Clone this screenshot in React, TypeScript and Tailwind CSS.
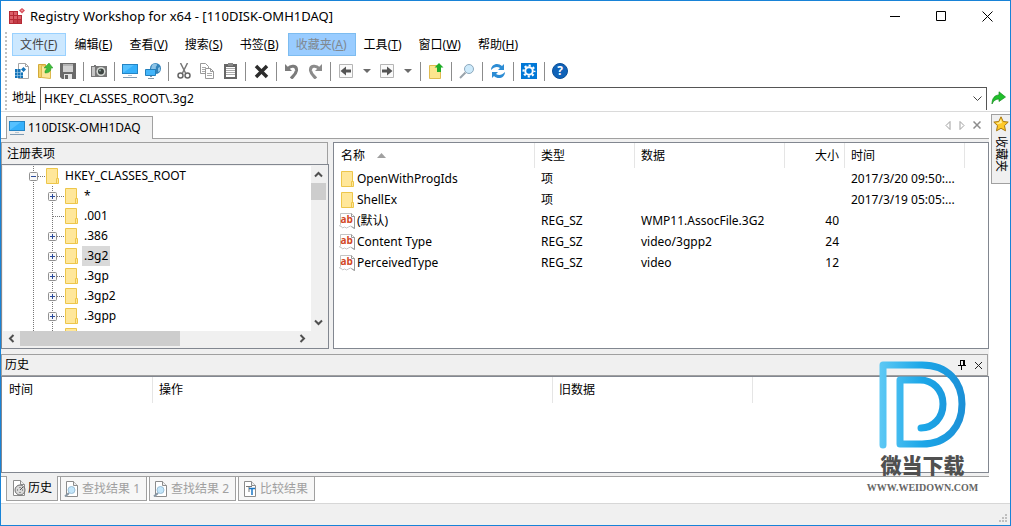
import type { ReactNode } from 'react'

const menus = [
  { label: '文件', key: 'F', style: 'border-[#99d1ff] bg-[#cce8ff] text-[#444]' },
  { label: '编辑', key: 'E', style: 'border-transparent' },
  { label: '查看', key: 'V', style: 'border-transparent' },
  { label: '搜索', key: 'S', style: 'border-transparent' },
  { label: '书签', key: 'B', style: 'border-transparent' },
  { label: '收藏夹', key: 'A', style: 'border-[#7dbcf0] bg-[#99ccff] text-[#808890]' },
  { label: '工具', key: 'T', style: 'border-transparent' },
  { label: '窗口', key: 'W', style: 'border-transparent' },
  { label: '帮助', key: 'H', style: 'border-transparent' },
]

const treeKeys = [
  { name: '*', leaf: false },
  { name: '.001', leaf: true },
  { name: '.386', leaf: false },
  { name: '.3g2', leaf: false, selected: true },
  { name: '.3gp', leaf: false },
  { name: '.3gp2', leaf: false },
  { name: '.3gpp', leaf: false },
  { name: '', leaf: false },
]

const values = [
  { name: 'OpenWithProgIds', type: '项', data: '', size: '', time: '2017/3/20 09:50:...' },
  { name: 'ShellEx', type: '项', data: '', size: '', time: '2017/3/19 05:05:...' },
  { name: '(默认)', type: 'REG_SZ', data: 'WMP11.AssocFile.3G2', size: '40', time: '' },
  { name: 'Content Type', type: 'REG_SZ', data: 'video/3gpp2', size: '24', time: '' },
  { name: 'PerceivedType', type: 'REG_SZ', data: 'video', size: '12', time: '' },
]

function Icon({ children }: { children: ReactNode }) {
  return (
    <svg width="16" height="16" viewBox="0 0 16 16" className="shrink-0" aria-hidden="true">
      {children}
    </svg>
  )
}

function Folder() {
  return (
    <svg width="13" height="16" viewBox="0 0 13 16" className="shrink-0" aria-hidden="true">
      <path d="M.5.5h11v10h1v5H.5z" fill="#ffe79a" stroke="#edc64b" />
      <path d="M10.500 15v-4.500h1.500" fill="none" stroke="#edc64b" />
    </svg>
  )
}

function Monitor() {
  return (
    <Icon>
      <rect x=".5" y="1.500" width="15" height="9" fill="#35b0fb" stroke="#2484c4" />
      <path d="M1 10V2h11z" fill="#56c1ff" />
      <path d="M6 12.500h4" stroke="#b9c6d2" />
      <path d="M1 14.500h14" stroke="#7f9bb3" />
    </Icon>
  )
}

function StringValue() {
  return (
    <Icon>
      <path d="M1.500.5h11l3 3v12l-2-1-2-1.500-2 1-2 1-2-1-2 1-1-1.500-2-.5 1-1.500z" fill="#fff" stroke="#c4c4c4" />
      <path d="M12.500.5v3h3v12l-3-2" fill="none" stroke="#999" />
      <text x="1.500" y="10" fontSize="10" fontWeight="bold" fontFamily="Open Sans, sans-serif" fill="#d24726">ab</text>
    </Icon>
  )
}

function Page({ children }: { children: ReactNode }) {
  return (
    <Icon>
      <path d="M2.500.5h7l4 4v11h-11z" fill="#fff" stroke="#8c8c8c" />
      <path d="M9.500.5v4h4" fill="#eee" stroke="#8c8c8c" />
      {children}
    </Icon>
  )
}

function SearchPage() {
  return (
    <Page>
      <path d="M5 12l-4 3.500" stroke="#8796a3" strokeWidth="2" />
      <circle cx="7.500" cy="9" r="3.500" fill="#c3e6fb" stroke="#9cc0d8" />
    </Page>
  )
}

function Separator() {
  return <span className="h-[19px] w-px bg-[#8c8c8c]" />
}

function Tool({ label, children }: { label: string; children: ReactNode }) {
  return (
    <button type="button" aria-label={label} title={label} className="shrink-0">
      <Icon>{children}</Icon>
    </button>
  )
}

function DropArrow({ label }: { label: string }) {
  return (
    <button type="button" aria-label={label} className="flex w-[11px] justify-center">
      <svg width="8" height="4" viewBox="0 0 8 4">
        <path d="M0 0h8L4 4z" fill="#6b6b6b" />
      </svg>
    </button>
  )
}

function TitleBar() {
  return (
    <header className="flex h-[30px] items-center pl-2">
      <Icon>
        <path d="M0 3h9v4h4v9H0z" fill="#b52a35" />
        <path d="M1 4h3v3H1zM5 4h3v3H5zM1 8h3v3H1zM5 8h3v3H5zM9 8h3v3H9zM1 12h3v3H1z" fill="#db6069" />
        <path d="M5 12h3v3H5zM9 12h3v3H9z" fill="#c23c47" />
        <path d="M13 0l3 2.500-3 3-3-3z" fill="#d9525d" />
        <path d="M13 1.500l1 1-1 1-1-1z" fill="#f3aab0" />
      </Icon>
      <h1 className="ml-[5px] flex-1 text-[13px]">Registry Workshop for x64 - [110DISK-OMH1DAQ]</h1>
      <div className="flex">
        <button type="button" aria-label="最小化" className="flex h-7 w-[46px] items-center justify-center">
          <svg width="11" height="11" viewBox="0 0 11 11"><path d="M0 5.500h10" stroke="#000" /></svg>
        </button>
        <button type="button" aria-label="最大化" className="flex h-7 w-[46px] items-center justify-center">
          <svg width="11" height="11" viewBox="0 0 11 11"><path d="M.5.5h9v9h-9z" fill="none" stroke="#000" /></svg>
        </button>
        <button type="button" aria-label="关闭" className="flex h-7 w-[46px] items-center justify-center">
          <svg width="11" height="11" viewBox="0 0 11 11"><path d="M.5.5l10 10M10.500.5l-10 10" stroke="#000" /></svg>
        </button>
      </div>
    </header>
  )
}

function MenuBar() {
  return (
    <nav className="flex h-[27px] items-center">
      {menus.map((m) => (
        <button key={m.key} type="button" className={`h-[23px] border pr-2 pl-[7px] whitespace-nowrap ${m.style}`}>
          {m.label}(<u>{m.key}</u>)
        </button>
      ))}
    </nav>
  )
}

function Toolbar() {
  return (
    <div className="flex h-7 items-center gap-[7px] pb-[2px] pl-[2px]">
      <Tool label="新建">
        <path d="M4.500.5h7l3 3v12h-10z" fill="#fff" stroke="#a5a5a5" />
        <path d="M11.500.5v3h3" fill="none" stroke="#a5a5a5" />
        <path d="M1 6h6v3h2v6H1z" fill="#1674b8" />
        <path d="M3.500 6v9M6.500 6v9M1 9.500h8M1 12.500h8" stroke="#a9d2ec" strokeWidth=".6" />
        <path d="M9.500 4l2.500 2.500L9.500 9 7 6.500z" fill="#1674b8" />
      </Tool>
      <Tool label="打开">
        <path d="M1.500 1.500h7v13h-7z" fill="#f3d36a" stroke="#d2aa3a" />
        <path d="M4.500 2.500l9 2v11l-9-1z" fill="#fbe69a" stroke="#ddb94e" />
        <path d="M8 10V8l2-3H7l5-5 4 5h-2c0 4-3 5-6 5z" fill="#3fbc3c" stroke="#2a9a2a" strokeWidth=".5" />
      </Tool>
      <Tool label="保存">
        <path d="M0 0h16v16H2l-2-2z" fill="#6a6a6a" />
        <path d="M3 1h10v8H3z" fill="#d2d2d2" />
        <path d="M3 1h10v2H3z" fill="#b4b4b4" />
        <path d="M4 11h8v5H4z" fill="#e6e6e6" />
        <path d="M5 12h3v4H5z" fill="#666" />
      </Tool>
      <Separator />
      <Tool label="快照">
        <path d="M0 3h3V2h2v1h11v11H0z" fill="#777" />
        <path d="M1 4h3v9H1z" fill="#c5c5c5" />
        <circle cx="10" cy="8.500" r="4.500" fill="#d6dad6" />
        <circle cx="10" cy="8.500" r="3" fill="#3d4542" />
        <circle cx="9" cy="7.500" r="1" fill="#93aaa3" />
      </Tool>
      <Separator />
      <button type="button" aria-label="本地计算机"><Monitor /></button>
      <Tool label="网络计算机">
        <circle cx="10.500" cy="5.500" r="5.500" fill="#3283ba" />
        <path d="M7 2c3-2 5-1 5 0s-2 2-1 3-4 2-5 1zM13 5l2-1v4l-2 1z" fill="#8cc3e6" />
        <path d="M.5 6.500h10v6H.5z" fill="#43b5fa" stroke="#2380bd" />
        <path d="M3 15.500h6M5 13.500h2" stroke="#8498a8" />
      </Tool>
      <Separator />
      <Tool label="剪切">
        <path d="M4.500 0l5 10M11.500 0l-5 10" stroke="#777" strokeWidth="1.500" />
        <circle cx="4.500" cy="12.500" r="2.500" fill="none" stroke="#666" strokeWidth="1.500" />
        <circle cx="11.500" cy="12.500" r="2.500" fill="none" stroke="#666" strokeWidth="1.500" />
      </Tool>
      <Tool label="复制">
        <path d="M1.500.5h5l3 3v7h-8z" fill="#fff" stroke="#999" />
        <path d="M3 4.500h4M3 6.500h4M3 8.500h3" stroke="#aaa" />
        <path d="M6.500 5.500h5l3 3v7h-8z" fill="#fff" stroke="#999" />
        <path d="M11.500 5.500v3h3" fill="none" stroke="#999" />
        <path d="M8 10.500h5M8 12.500h5" stroke="#aaa" />
      </Tool>
      <Tool label="粘贴">
        <path d="M2 1h13v15H2z" fill="#666" />
        <path d="M4 4h9v10H4z" fill="#fff" />
        <path d="M4 5.500h9M4 7.500h9M4 9.500h9M4 11.500h9" stroke="#aaa" />
        <path d="M6 0h5v3H6z" fill="#888" />
      </Tool>
      <Separator />
      <Tool label="删除">
        <path d="M3 3l11 11M14 3L3 14" stroke="#2c2c2c" strokeWidth="3.500" />
      </Tool>
      <Separator />
      <Tool label="撤消">
        <path d="M4 5.500C7 2 13 2.500 12.500 7.500 12 11 9.500 12.500 7 15.500" fill="none" stroke="#7b7b7b" strokeWidth="3" />
        <path d="M1 1v7h7z" fill="#7b7b7b" />
      </Tool>
      <Tool label="重做">
        <path d="M12 5.500C9 2 3 2.500 3.500 7.500 4 11 6.500 12.500 9 15.500" fill="none" stroke="#8b8b8b" strokeWidth="3" />
        <path d="M15 1v7H8z" fill="#8b8b8b" />
      </Tool>
      <Separator />
      <Tool label="后退">
        <path d="M1.500 1.500h13v13h-13z" fill="#fafafa" stroke="#b5b5b5" />
        <path d="M2.500 8L8 3.500v3h5v3H8v3z" fill="#555" />
      </Tool>
      <DropArrow label="后退历史" />
      <Tool label="前进">
        <path d="M1.500 1.500h13v13h-13z" fill="#fafafa" stroke="#b5b5b5" />
        <path d="M13.500 8L8 3.500v3H3v3h5v3z" fill="#555" />
      </Tool>
      <DropArrow label="前进历史" />
      <Separator />
      <Tool label="上一级">
        <path d="M1.500 2.500h11v13h-11z" fill="#fde58e" stroke="#e0bb50" />
        <path d="M11 0l4.500 4.500H13V9H9V4.500H6.500z" fill="#1fae28" />
      </Tool>
      <Separator />
      <Tool label="查找">
        <path d="M6.500 9.500L1 15" stroke="#9aa3ab" strokeWidth="2" />
        <circle cx="10" cy="6" r="4.500" fill="#cdeafb" stroke="#8da9bd" />
      </Tool>
      <Separator />
      <Tool label="刷新">
        <path d="M1 7c0-6 7-8 11-4l2-2v6H8l2-2C7 3 4 4 1 7z" fill="#2c8cd4" />
        <path d="M15 9c0 6-7 8-11 4l-2 2V9h6l-2 2c3 2 6 1 9-2z" fill="#2c8cd4" />
      </Tool>
      <Separator />
      <Tool label="选项">
        <path d="M0 0h16v16H0z" fill="#0078d7" />
        <circle cx="8" cy="8" r="3.750" fill="none" stroke="#fff" strokeWidth="2" />
        <circle cx="8" cy="8" r="5.500" fill="none" stroke="#fff" strokeWidth="2" strokeDasharray="2.160 2.160" strokeDashoffset="1.080" />
      </Tool>
      <Separator />
      <Tool label="帮助">
        <circle cx="8" cy="8" r="7.500" fill="#0f62b8" stroke="#0a4f98" />
        <text x="8" y="12" textAnchor="middle" fontSize="12" fontWeight="bold" fontFamily="Open Sans, sans-serif" fill="#fff">?</text>
      </Tool>
    </div>
  )
}

function AddressBar() {
  return (
    <div className="flex h-6 items-end">
      <label htmlFor="address" className="mr-1 self-center">地址</label>
      <div className="flex h-[23px] flex-1 border border-b-0 border-[#555]">
        <input id="address" defaultValue="HKEY_CLASSES_ROOT\.3g2" className="min-w-0 flex-1 bg-white pl-[3px] outline-none" />
        <button type="button" aria-label="地址列表" className="w-[17px] pl-1">
          <svg width="9" height="6" viewBox="0 0 9 6"><path d="M.5.5l4 4 4-4" fill="none" stroke="#444" /></svg>
        </button>
      </div>
      <button type="button" aria-label="转到" className="flex w-[23px] justify-center self-center">
        <svg width="15" height="14" viewBox="0 0 15 14">
          <path d="M1 13C1 7 4 4 8 4V.8L14.500 6 8 10.500V8C5 8 2.500 9.500 1 13z" fill="#1fc02b" stroke="#168a1e" strokeWidth=".7" />
        </svg>
      </button>
    </div>
  )
}

// dotted connector with an optional +/- box
function Branch({ kind }: { kind: 'line' | 'leaf' | 'plus' | 'minus' }) {
  return (
    <svg width="19" height="20" viewBox="0 0 19 20" className="shrink-0 overflow-visible" aria-hidden="true">
      <path d="M9.500 0v20" stroke="#777" strokeDasharray="1 1" />
      {kind !== 'line' && <path d="M10 10.500h11" stroke="#777" strokeDasharray="1 1" />}
      {(kind === 'plus' || kind === 'minus') && (
        <>
          <rect x="5.500" y="6.500" width="8" height="8" rx="1" fill="#f8f8f8" stroke="#919191" />
          <path d="M7 10.500h5" stroke="#2b4c9b" />
        </>
      )}
      {kind === 'plus' && <path d="M9.500 8v5" stroke="#2b4c9b" />}
    </svg>
  )
}

function Chevron({ d }: { d: string }) {
  return (
    <svg width="9" height="9" viewBox="0 0 9 9" aria-hidden="true">
      <path d={d} fill="none" stroke="#505050" strokeWidth="2" />
    </svg>
  )
}

function TreePanel() {
  return (
    <section className="w-[328px] shrink-0">
      <h2 className="mr-px flex h-[22px] items-center border border-b-0 border-[#a0a0a0] bg-[#f0f0f0] pl-[5px]">注册表项</h2>
      <div className="border border-[#828790] bg-[#f0f0f0] py-px pr-[2px] pl-px">
        <div className="flex h-[165px]">
          <ul className="min-w-0 flex-1 overflow-hidden bg-white pl-[21px]">
            <li className="flex h-5 items-center">
              <Branch kind="minus" />
              <span className="ml-[3px]"><Folder /></span>
              <span className="ml-1 px-[2px]">HKEY_CLASSES_ROOT</span>
            </li>
            {treeKeys.map((k) => (
              <li key={k.name} className="flex h-5 items-center">
                <Branch kind="line" />
                <Branch kind={k.leaf ? 'leaf' : 'plus'} />
                <span className="ml-[3px]"><Folder /></span>
                <span className={`ml-1 h-5 px-[2px] leading-5 ${k.selected ? 'bg-[#d9d9d9]' : ''}`}>{k.name}</span>
              </li>
            ))}
          </ul>
          <div className="flex w-[15px] flex-col items-center">
            <button type="button" aria-label="向上滚动" className="flex h-[17px] items-center"><Chevron d="M1 6.500L4.500 3 8 6.500" /></button>
            <div className="h-[17px] w-full bg-[#cdcdcd]" />
            <div className="flex-1" />
            <button type="button" aria-label="向下滚动" className="flex h-[17px] items-center"><Chevron d="M1 2.500L4.500 6 8 2.500" /></button>
          </div>
        </div>
        <div className="flex h-4 items-start">
          <button type="button" aria-label="向左滚动" className="flex h-[15px] w-[17px] items-center justify-center"><Chevron d="M6.500 1L3 4.500 6.500 8" /></button>
          <div className="h-[15px] w-40 bg-[#cdcdcd]" />
          <div className="flex-1" />
          <button type="button" aria-label="向右滚动" className="mr-[15px] flex h-[15px] w-[17px] items-center justify-center"><Chevron d="M2.500 1L6 4.500 2.500 8" /></button>
        </div>
      </div>
    </section>
  )
}

function ValueList() {
  return (
    <section className="min-w-0 flex-1 border border-[#828790] bg-white pl-px">
      <table className="w-full table-fixed border-separate border-spacing-0">
        <colgroup>
          <col className="w-[200px]" />
          <col className="w-[100px]" />
          <col className="w-[150px]" />
          <col className="w-[60px]" />
          <col className="w-[120px]" />
          <col />
        </colgroup>
        <thead>
          <tr className="h-[25px] text-left">
            <th className="border-r border-[#e5e5e5] pl-[6px] font-normal">
              <span className="flex items-center gap-3">
                名称
                <svg width="9" height="5" viewBox="0 0 9 5"><path d="M0 5h9L4.500 0z" fill="#a0a0a0" /></svg>
              </span>
            </th>
            <th className="border-r border-[#e5e5e5] pl-[6px] font-normal">类型</th>
            <th className="border-r border-[#e5e5e5] pl-[6px] font-normal">数据</th>
            <th className="border-r border-[#e5e5e5] pr-[5px] text-right font-normal">大小</th>
            <th className="border-r border-[#e5e5e5] pl-[6px] font-normal">时间</th>
            <td />
          </tr>
        </thead>
        <tbody>
          {values.map((v) => (
            <tr key={v.name} className="h-[21px] whitespace-nowrap">
              <td className="pl-1">
                <span className="flex items-center gap-[2px]">
                  {v.type === '项' ? <span className="flex w-4 pl-[2px]"><Folder /></span> : <StringValue />}
                  {v.name}
                </span>
              </td>
              <td className="pl-[6px]">{v.type}</td>
              <td className="pl-[6px]">{v.data}</td>
              <td className="pr-[6px] text-right">{v.size}</td>
              <td className="pl-[6px]">{v.time}</td>
              <td />
            </tr>
          ))}
        </tbody>
      </table>
    </section>
  )
}

function HistoryPanel() {
  return (
    <section className="mt-[5px] flex flex-1 flex-col">
      <div className="mr-px flex h-[22px] items-center border border-[#a0a0a0] bg-[#f0f0f0] pr-1 pl-[3px]">
        <h2 className="flex-1">历史</h2>
        <button type="button" aria-label="固定" className="mr-2">
          <svg width="8" height="10" viewBox="0 0 8 10">
            <path d="M2.500 0v5M5.500 0v5M2 .5h4M0 5.500h8M3.500 6v4" fill="none" stroke="#000" />
            <path d="M5 0h2v5H5z" />
          </svg>
        </button>
        <button type="button" aria-label="关闭历史">
          <svg width="9" height="9" viewBox="0 0 9 9"><path d="M1 1l7 7M8 1L1 8" stroke="#222" /></svg>
        </button>
      </div>
      <div className="flex-1 border border-[#828790] bg-white">
        <table className="w-full table-fixed border-separate border-spacing-0">
          <thead>
            <tr className="h-[26px] text-left">
              <th className="w-[151px] border-r border-[#e5e5e5] pl-[7px] font-normal">时间</th>
              <th className="w-[400px] border-r border-[#e5e5e5] pl-[6px] font-normal">操作</th>
              <th className="w-[200px] border-r border-[#e5e5e5] pl-[6px] font-normal">旧数据</th>
              <td />
            </tr>
          </thead>
        </table>
      </div>
    </section>
  )
}

function BottomTabs() {
  return (
    <div className="mt-[3px] flex h-[27px] items-start gap-[2px] border-t border-[#a0a0a0] bg-white pl-[5px]">
      <button type="button" className="-mt-px flex h-[25px] items-center gap-px border border-t-0 border-[#a0a0a0] bg-[#f0f0f0] pr-[5px] pl-1">
        <Page>
          <circle cx="9" cy="10" r="5" fill="#d9d9d9" stroke="#6d6d6d" />
          <path d="M9 10l3-3M6 10h1M9 13v-1M11 10h1M9 7v1" stroke="#555" />
        </Page>
        历史
      </button>
      {['查找结果 1', '查找结果 2', '比较结果'].map((name) => (
        <button key={name} type="button" className="flex h-6 items-center gap-[2px] border border-t-0 border-[#a0a0a0] bg-[#f7f7f7] pr-[6px] pl-[3px] text-[#a0a0a0]">
          {name === '比较结果' ? (
            <Page>
              <path d="M4 5.500h6M7 5v6" stroke="#777" />
              <path d="M7 7.500h6M10 7v7" stroke="#1a76c4" strokeWidth="1.500" />
            </Page>
          ) : (
            <SearchPage />
          )}
          {name}
        </button>
      ))}
    </div>
  )
}

function Watermark() {
  return (
    <div className="pointer-events-none absolute right-[32px] bottom-[29px] flex w-[111px] flex-col items-center">
      <svg width="88" height="90" viewBox="0 0 88 90" className="mr-[2px]" aria-hidden="true">
        <defs>
          <linearGradient id="logo" gradientUnits="userSpaceOnUse" x1="0" y1="0" x2="88" y2="0">
            <stop offset="0" stopColor="#60caf5" />
            <stop offset=".5" stopColor="#1ca7e8" />
            <stop offset="1" stopColor="#1c8fd6" />
          </linearGradient>
        </defs>
        <path d="M5 85V5H44C70 5 84 22 84 44S70 84 44 84H22V20H42C55 20 65 30 65 44S55 68 43 68" fill="none" stroke="url(#logo)" strokeWidth="7" strokeLinecap="round" strokeLinejoin="round" />
      </svg>
      <p className="mt-[2px] text-[21px] leading-[26px] font-black whitespace-nowrap text-[#505050]">微当下载</p>
      <p className="mt-[2px] font-['Liberation_Serif',serif] text-[10px] leading-[16px] font-bold whitespace-nowrap text-[#666]">WWW.WEIDOWN.COM</p>
    </div>
  )
}

export default function App() {
  return (
    <div className="relative flex min-h-screen flex-col border border-[#1883d7] bg-white font-['Noto_Sans','Noto_Sans_CJK_SC',sans-serif] text-[12px] leading-4 text-black">
      <TitleBar />
      <div className="flex border-b border-[#dadada] pl-1">
        <div className="mt-px mr-[5px] w-[2px] bg-[repeating-linear-gradient(#c0c0c0_0_2px,transparent_2px_4px)]" />
        <div className="min-w-0 flex-1 pb-px">
          <MenuBar />
          <Toolbar />
          <AddressBar />
        </div>
      </div>

      <div className="flex flex-1">
        <main className="flex min-w-0 flex-1 flex-col bg-[#f0f0f0]">
          {/* Document tabs */}
          <div className="flex h-[27px] items-end border-b border-[#a0a0a0] bg-white pl-[5px]">
            <button type="button" className="-mb-px flex h-[23px] items-center gap-[3px] border border-b-0 border-[#a0a0a0] bg-[#f0f0f0] pr-[11px] pl-[2px]">
              <Monitor />
              110DISK-OMH1DAQ
            </button>
            <div className="flex-1" />
            <div className="flex items-center gap-2 self-center pr-2">
              <button type="button" aria-label="上一个标签">
                <svg width="6" height="9" viewBox="0 0 6 9"><path d="M5 .5v8l-4-4z" fill="none" stroke="#a0a0a0" /></svg>
              </button>
              <button type="button" aria-label="下一个标签">
                <svg width="6" height="9" viewBox="0 0 6 9"><path d="M1 .5v8l4-4z" fill="none" stroke="#a0a0a0" /></svg>
              </button>
              <button type="button" aria-label="关闭标签">
                <svg width="8" height="8" viewBox="0 0 8 8"><path d="M.5.5l7 7M7.500.5l-7 7" stroke="#8c8c8c" strokeWidth="1.500" /></svg>
              </button>
            </div>
          </div>
          <div className="mt-[3px] flex gap-1">
            <TreePanel />
            <ValueList />
          </div>
          <HistoryPanel />
          <BottomTabs />
        </main>
        <aside className="w-[21px] pt-[2px] pl-[2px]">
          <button type="button" className="flex h-[70px] w-full flex-col items-center gap-1 border border-r-0 border-[#a0a0a0] bg-[#f0f0f0] pt-px">
            <Icon>
              <path d="M8 .8l2.200 4.700 5 .6-3.700 3.500 1 5.200L8 12.300l-4.500 2.500 1-5.200L.8 6.100l5-.6z" fill="#ffc928" stroke="#a87810" />
              <path d="M8 3l1 4-4 1-2-1 3-.5z" fill="#fff0a0" />
            </Icon>
            <span className="[text-orientation:sideways] [writing-mode:vertical-rl]">收藏夹</span>
          </button>
        </aside>
      </div>

      <footer className="flex h-[22px] items-end justify-end border-t border-[#d7d7d7] bg-[#f0f0f0] p-[2px]">
        <svg width="9" height="9" viewBox="0 0 9 9" aria-hidden="true">
          <path d="M6 0h2v2H6zM3 3h2v2H3zM6 3h2v2H6zM0 6h2v2H0zM3 6h2v2H3zM6 6h2v2H6z" fill="#bfbfbf" />
        </svg>
      </footer>
      <Watermark />
    </div>
  )
}
